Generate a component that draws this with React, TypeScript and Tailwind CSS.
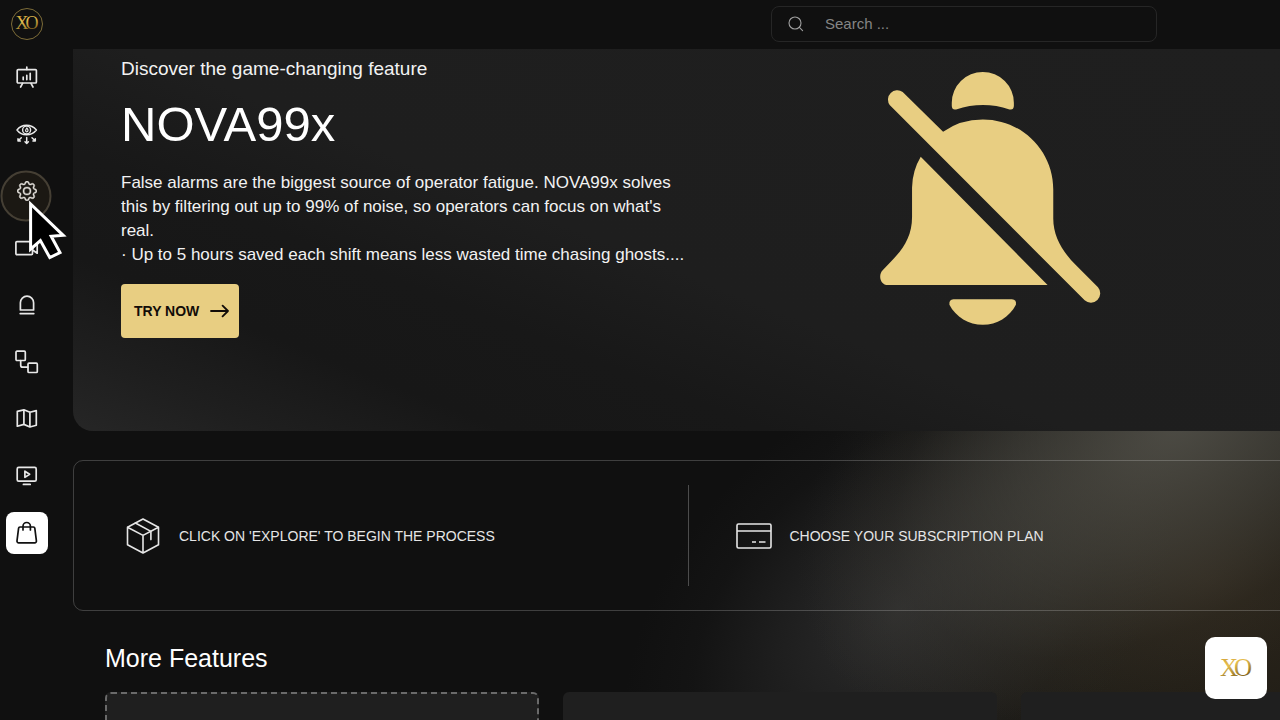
import type { ReactNode } from "react";
import { BsGear } from "react-icons/bs";

function LineIcon({ children }: { children: ReactNode }) {
  return (
    <svg
      viewBox="0 0 24 24"
      className="size-6"
      fill="none"
      stroke="currentColor"
      strokeWidth="1.7"
      strokeLinecap="round"
      strokeLinejoin="round"
      aria-hidden="true"
    >
      {children}
    </svg>
  );
}

const navItems: { label: string; icon: ReactNode; active?: boolean }[] = [
  {
    label: "Dashboard",
    icon: (
      <LineIcon>
        <rect x="2.2" y="4.6" width="19.2" height="13.4" rx="1" />
        <path d="M11.8 2v2.4M7.6 18.4 5.6 22M16 18.4l2 3.6" />
        <path d="M8.2 14.6v-2.4M11.8 14.6v-4.2M15.2 14.6V8.4" />
      </LineIcon>
    ),
  },
  {
    label: "Monitoring",
    icon: (
      <LineIcon>
        <path d="M2 8c2.4-3.2 5.6-4.8 9.6-4.8S18.8 4.8 21.4 8c-2.6 3.2-5.8 4.8-9.8 4.8S4.4 11.2 2 8Z" strokeWidth="1.5" />
        <circle cx="11.6" cy="8" r="4" strokeWidth="1.4" />
        <path d="M11.8 6c1.6 1.6 1.6 3.600 0 3.800-1.800-.2-1.400-1.800 0-3.800Z" strokeWidth="1.2" />
        <path
          d="M6.300 15.800 3 19M3 16.800V19h2.400M11.700 15.400v6M10 19.800l1.700 1.700 1.700-1.700M17 15.800l3.300 3.200M20.300 16.800V19h-2.400"
          strokeWidth="1.5"
        />
      </LineIcon>
    ),
  },
  {
    label: "Settings",
    icon: <BsGear className="size-5" stroke="currentColor" strokeWidth="0.3" aria-hidden="true" />,
  },
  {
    label: "Cameras",
    icon: (
      <LineIcon>
        <rect x="0.9" y="5.6" width="16.6" height="13" rx="1" />
        <path d="m17.6 11 4.600-3.200v9.400L17.600 14Z" />
      </LineIcon>
    ),
  },
  {
    label: "Alarms",
    icon: (
      <LineIcon>
        <path d="M5.400 17V9.800a6.600 6.600 0 0 1 13.200 0V17Z" />
        <path d="M5.200 20.600h13.600" />
      </LineIcon>
    ),
  },
  {
    label: "Workflows",
    icon: (
      <LineIcon>
        <rect x="1" y="1.2" width="9.3" height="9.3" rx="1" />
        <rect x="13" y="13.2" width="9.3" height="9.3" rx="1" />
        <path d="M5.700 10.600v4.600q0 2 2 2h5" />
      </LineIcon>
    ),
  },
  {
    label: "Map",
    icon: (
      <LineIcon>
        <path d="m2.300 4.400 6.600-1.600 6 2.400 6.400-1.600v14.600L14.900 20l-6-2.600-6.600 1.800ZM8.900 2.800v14.600M14.900 5.200V20" />
      </LineIcon>
    ),
  },
  {
    label: "Playback",
    icon: (
      <LineIcon>
        <rect x="2.2" y="3.4" width="19" height="13.8" rx="1.5" />
        <path d="m9.900 7.200 4.700 3.100-4.700 3.100ZM8.400 20.400h6.800" />
      </LineIcon>
    ),
  },
  {
    label: "Store",
    active: true,
    icon: (
      <LineIcon>
        <path d="M5 6h13.400a1.400 1.400 0 0 1 1.400 1.200l1.600 12.600a1.700 1.700 0 0 1-1.700 2H3.700a1.700 1.700 0 0 1-1.700-2L3.600 7.200A1.400 1.400 0 0 1 5 6Z" />
        <path d="M8 9V5.200a3.700 3.700 0 0 1 7.400 0V9" />
      </LineIcon>
    ),
  },
];

function XoMark({ id, className }: { id: string; className: string }) {
  return (
    <svg viewBox="0 0 36 32" className={className} role="img" aria-label="XO">
      <defs>
        <linearGradient id={id} x1="0" y1="0" x2="0.4" y2="1">
          <stop offset="0" stopColor="#c9962a" />
          <stop offset="0.45" stopColor="#e6bf52" />
          <stop offset="1" stopColor="#80611a" />
        </linearGradient>
      </defs>
      <text
        x="2"
        y="24"
        fill={`url(#${id})`}
        fontFamily="Liberation Serif, serif"
        fontSize="25"
      >
        X<tspan dx="-4">O</tspan>
      </text>
    </svg>
  );
}

function Sidebar() {
  return (
    <aside className="flex w-[73px] shrink-0 flex-col pl-[6px]">
      <a
        href="#home"
        aria-label="Home"
        className="mt-2 ml-[5px] flex size-8 shrink-0 items-center justify-center self-start rounded-full border border-[#7d6c38]"
      >
        <XoMark id="gold-logo" className="w-[26px]" />
      </a>
      <nav aria-label="Main" className="mt-4 flex flex-col items-start gap-[15px]">
        {navItems.map((item) => (
          <button
            key={item.label}
            type="button"
            aria-label={item.label}
            className={
              item.active
                ? "flex size-[42px] items-center justify-center rounded-lg bg-white text-[#111111]"
                : "flex size-[42px] items-center justify-center rounded-lg text-[#e8e8e8]"
            }
          >
            {item.icon}
          </button>
        ))}
      </nav>
    </aside>
  );
}

function Header() {
  return (
    <header className="flex h-[49px] shrink-0 items-center justify-end pr-[123px] pb-px">
      <div className="flex h-9 w-[386px] items-center gap-[21px] rounded-lg border border-[#262626] px-4">
        <svg
          viewBox="0 0 16 16"
          className="size-4 shrink-0"
          fill="none"
          stroke="#a0a0a0"
          strokeWidth="1.1"
          strokeLinecap="round"
          aria-hidden="true"
        >
          <circle cx="7" cy="7" r="6" />
          <path d="m11.4 11.4 3.2 3.2" />
        </svg>
        <input
          type="search"
          aria-label="Search"
          placeholder="Search ..."
          className="h-6 min-w-0 flex-1 bg-transparent text-[15px] leading-6 text-[#d0d0d0] outline-none placeholder:text-[#858585]"
        />
      </div>
    </header>
  );
}

function MutedBell() {
  return (
    <svg viewBox="60 66 662 758" className="w-[221px]" fill="#e8ce82" aria-hidden="true">
      <path d="M275 158a93 92 0 0 1 186 0v10q-1 13-13 10-79-26-160 0-12 3-13-10Z" />
      <path d="M128 126 249 245Q300 208 368 208C485 208 579 302 579 418V505C579 560 608 606 648 646L713 711A28 28 0 0 1 673 750L89 165A28 28 0 0 1 128 126Z" />
      <path d="M182 320 562 704H84C60 704 54 674 68 660L93 634C130 595 156 558 156 500V412Q157 362 182 320Z" />
      <path d="M280 747H455Q470 748 467 763C448 800 410 823 368 823S287 800 268 763Q266 748 280 747Z" />
    </svg>
  );
}

function Hero() {
  return (
    <section className="relative grid grid-cols-2 rounded-b-[20px] bg-[linear-gradient(22deg,#262626_0%,#1e1e1e_10%,#171717_20%,#181818_32%,#1e1e1e_46%,#1f1f1f_100%)] pb-[93px]">
      <div className="pt-2 pl-12">
        <p className="text-[19px] leading-6 text-[#f2f2f2]">Discover the game-changing feature</p>
        <h1 className="mt-[15px] text-[49px] leading-[56px] text-white">NOVA99x</h1>
        <p className="mt-[19px] text-[17px] leading-6 text-[#f2f2f2]">
          False alarms are the biggest source of operator fatigue. NOVA99x solves
          <br />
          this by filtering out up to 99% of noise, so operators can focus on what's
          <br />
          real.
          <br />· Up to 5 hours saved each shift means less wasted time chasing ghosts....
        </p>
        <button
          type="button"
          className="mt-[17px] flex h-[54px] items-center gap-[11px] rounded bg-[#e8ce82] pr-[10px] pl-[13px] text-sm font-bold text-[#120c08]"
        >
          TRY NOW
          <svg
            viewBox="0 0 19 14"
            className="w-[19px]"
            fill="none"
            stroke="currentColor"
            strokeWidth="1.8"
            strokeLinecap="round"
            strokeLinejoin="round"
            aria-hidden="true"
          >
            <path d="M1 7h17M12.6 1.6 18 7l-5.400 5.400" />
          </svg>
        </button>
      </div>
      <div className="flex items-start justify-center pt-[23px] pr-3">
        <MutedBell />
      </div>
    </section>
  );
}

function Steps() {
  return (
    <ol className="relative mt-[29px] grid grid-cols-2 rounded-[10px] border border-white/20 py-6 text-sm text-[#e6e6e6]">
      <li className="flex h-[101px] items-center gap-[19px] border-r border-white/25 pl-[52px]">
        <svg
          viewBox="0 0 34 36"
          className="w-[34px]"
          fill="none"
          stroke="currentColor"
          strokeWidth="1.6"
          strokeLinejoin="round"
          strokeLinecap="round"
          aria-hidden="true"
        >
          <path d="M17 1 32.500 9.200v17.600L17 35 1.500 26.800V9.200ZM1.500 9.200 17 17.400l15.500-8.200M17 17.400V35" />
          <path d="m9.400 5 15.500 8.400v8.200" />
        </svg>
        CLICK ON 'EXPLORE' TO BEGIN THE PROCESS
      </li>
      <li className="flex h-[101px] items-center gap-[18px] pl-[47px]">
        <svg
          viewBox="0 0 36 26"
          className="w-9"
          fill="none"
          stroke="currentColor"
          strokeWidth="1.6"
          aria-hidden="true"
        >
          <rect x="1" y="1" width="34" height="24" rx="1.5" />
          <path d="M1 8h34M16 19h4M23 19h6.500" />
        </svg>
        CHOOSE YOUR SUBSCRIPTION PLAN
      </li>
    </ol>
  );
}

function Glow() {
  return (
    <div className="pointer-events-none absolute inset-0 overflow-hidden" aria-hidden="true">
      <div className="absolute right-[-330px] bottom-[-160px] h-[600px] w-[800px] bg-[radial-gradient(closest-side,rgba(64,52,34,0.6),rgba(56,48,32,0.45)_45%,transparent)]" />
      <div className="absolute right-[60px] bottom-[-100px] h-[420px] w-[640px] -rotate-[42deg] bg-[radial-gradient(closest-side,rgba(68,68,68,0.55),rgba(62,62,62,0.3)_45%,rgba(50,50,50,0.1)_75%,transparent)]" />
      <div className="absolute right-[-330px] bottom-[50px] h-[500px] w-[860px] -rotate-[34deg] bg-[radial-gradient(closest-side,rgba(88,87,80,0.8),rgba(80,80,74,0.48)_42%,rgba(66,66,60,0.13)_75%,transparent)]" />
    </div>
  );
}

function Pointer() {
  return (
    <div className="pointer-events-none absolute top-[170px] left-0" aria-hidden="true">
      <svg viewBox="0 0 70 92" className="w-[70px]">
        <circle cx="26" cy="26" r="24.5" fill="#a08040" fillOpacity="0.08" stroke="#453f34" strokeWidth="2" />
        <path
          d="M30.600 34V79.200l9.800-8.600 9.400 17 10.200-5-8.800-16.400 12-.9Z"
          fill="#000000"
          stroke="#ffffff"
          strokeWidth="3"
          strokeLinejoin="miter"
        />
      </svg>
    </div>
  );
}

export default function App() {
  return (
    <div className="relative flex h-screen overflow-hidden bg-[#101010] font-['Liberation_Sans',Arial,sans-serif]">
      <Glow />
      <Sidebar />
      <div className="relative flex min-w-0 flex-1 flex-col">
        <Header />
        <main className="mr-[-24px] min-h-0 flex-1">
          <Hero />
          <Steps />
          <section className="pt-[31px] pl-8">
            <h2 className="text-[25px] leading-8 text-white">More Features</h2>
            <div className="mt-[18px] flex gap-6">
              <article className="h-60 w-[434px] shrink-0 rounded-md border-2 border-dashed border-[#6a6a6a] bg-[#1f1f1f]" />
              <article className="h-60 w-[434px] shrink-0 rounded-md bg-[#1f1f1f]" />
              <article className="h-60 w-[434px] shrink-0 rounded-md bg-[#1f1f1f]" />
            </div>
          </section>
        </main>
      </div>
      <button
        type="button"
        aria-label="Open assistant"
        className="absolute right-[13px] bottom-[21px] flex size-[62px] items-center justify-center rounded-[10px] bg-white"
      >
        <XoMark id="gold-chat" className="w-9" />
      </button>
      <Pointer />
    </div>
  );
}
